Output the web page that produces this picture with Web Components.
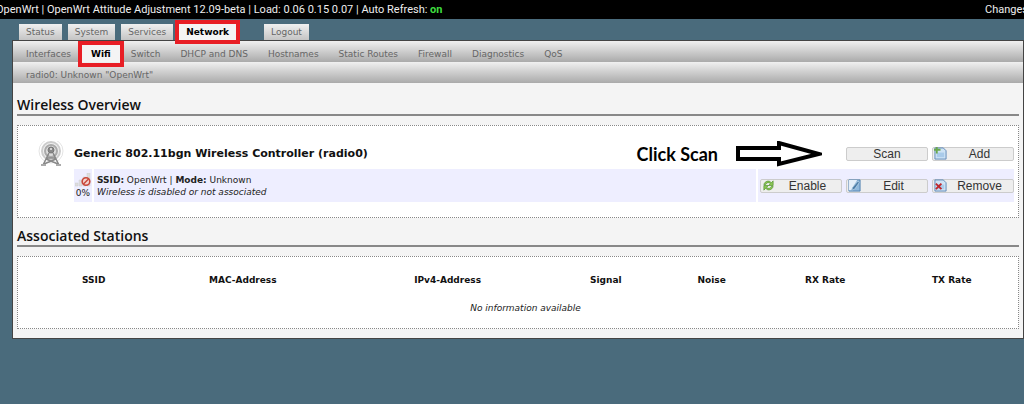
<!DOCTYPE html>
<html lang="en">
<head>
    <meta charset="UTF-8">
    <meta name="viewport" content="width=device-width, initial-scale=1.0">
    <title>OpenWrt - Wireless Overview</title>
    <style>
        body {
            margin: 0;
            background: #4a6b7c;
            font: 9px/12px "DejaVu Sans", Verdana, sans-serif;
            color: #222;
            overflow-x: hidden;
        }
        status-bar b { color: #3fdc3f; }
    </style>
</head>
<body>
    <status-bar>
        <span>OpenWrt | OpenWrt Attitude Adjustment 12.09-beta | Load: 0.06 0.15 0.07 | Auto Refresh: <b>on</b></span>
        <a slot="right" href="#changes">Changes</a>
    </status-bar>

    <nav-row kind="tabs">
        <nav-item kind="tab" href="#status">Status</nav-item>
        <nav-item kind="tab" href="#system">System</nav-item>
        <nav-item kind="tab" href="#services">Services</nav-item>
        <nav-item kind="tab" href="#network" active>Network</nav-item>
        <nav-item kind="tab" href="#logout" apart>Logout</nav-item>
    </nav-row>

    <main-panel>
        <nav-row kind="menu">
            <nav-item href="#interfaces">Interfaces</nav-item>
            <nav-item href="#wifi" active>Wifi</nav-item>
            <nav-item href="#switch">Switch</nav-item>
            <nav-item href="#dhcp">DHCP and DNS</nav-item>
            <nav-item href="#hostnames">Hostnames</nav-item>
            <nav-item href="#routes">Static Routes</nav-item>
            <nav-item href="#firewall">Firewall</nav-item>
            <nav-item href="#diagnostics">Diagnostics</nav-item>
            <nav-item href="#qos">QoS</nav-item>
        </nav-row>
        <nav-row kind="menu">
            <nav-item href="#radio0">radio0: Unknown "OpenWrt"</nav-item>
        </nav-row>

        <panel-section heading="Wireless Overview">
            <radio-device name="Generic 802.11bgn Wireless Controller (radio0)">
                <scan-hint slot="hint">Click Scan</scan-hint>
                <icon-button slot="actions">Scan</icon-button>
                <icon-button slot="actions" icon="add">Add</icon-button>
                <wifi-network ssid="OpenWrt" mode="Unknown" signal="0%">
                    Wireless is disabled or not associated
                    <icon-button slot="actions" icon="reload">Enable</icon-button>
                    <icon-button slot="actions" icon="edit">Edit</icon-button>
                    <icon-button slot="actions" icon="remove">Remove</icon-button>
                </wifi-network>
            </radio-device>
        </panel-section>

        <panel-section heading="Associated Stations">
            <station-table></station-table>
        </panel-section>
    </main-panel>

    <template id="status-bar">
        <style>
            :host {
                display: flex;
                justify-content: space-between;
                margin: 0 -4px;
                background: #000;
                color: #eee;
                font: 11px/19px Roboto, Tahoma, sans-serif;
                white-space: nowrap;
            }
            ::slotted(a) { color: inherit; text-decoration: none; }
        </style>
        <slot></slot>
        <slot name="right"></slot>
    </template>

    <template id="nav-row">
        <style>
            :host { display: block; }
            nav { display: flex; }
            :host([kind="tabs"]) nav { gap: 6px; padding: 5px 19px 0; }
            :host([kind="menu"]) nav {
                height: 21px;
                padding: 0 3px;
                background: linear-gradient(#f0f0f0, #aaa);
            }
        </style>
        <nav><slot></slot></nav>
    </template>

    <template id="nav-item">
        <style>
            :host { display: block; position: relative; }
            a {
                display: block;
                padding: 7px 10px 2px;
                color: #666;
                text-decoration: none;
                white-space: nowrap;
            }
            :host([kind="tab"]) a {
                padding: 2px 7px;
                background: linear-gradient(#f0f0f0, #c4c4c4);
            }
            :host([apart]) { margin-left: 22px; }
            :host([active]) a { color: #000; font-weight: bold; background: #f4f4f4; }
            /* red frame drawn over the current entry */
            :host([active])::after {
                content: "";
                position: absolute;
                z-index: 1;
                inset: -4px;
                border: 4px solid #e81e25;
                pointer-events: none;
            }
            :host([active]:not([kind="tab"]))::after { inset: 0 -3px -5px; }
        </style>
        <a><slot></slot></a>
    </template>

    <template id="main-panel">
        <style>
            :host {
                display: block;
                margin-left: 12px;
                padding-bottom: 9px;
                border: 1px solid #444;
                background: #f4f4f4;
            }
            ::slotted(panel-section:first-of-type) { margin-top: 4px; }
        </style>
        <slot></slot>
    </template>

    <template id="panel-section">
        <style>
            :host { display: block; padding: 8px 4px 0; }
            h2 {
                margin: 0 0 9px;
                border-bottom: 2px solid #888;
                color: #111;
                font: 600 14px/19px "Open Sans", "Trebuchet MS", sans-serif;
            }
            section { border: 1px dotted #888; background: #fff; }
        </style>
        <h2></h2>
        <section><slot></slot></section>
    </template>

    <template id="radio-device">
        <style>
            :host { display: block; padding: 14px 4px 15px 20px; }
            header { display: flex; align-items: center; gap: 4px; height: 27px; margin-bottom: 2px; }
            svg { width: 26px; height: 26px; flex: none; }
            h3 { flex: 1; margin: 0 0 0 6px; font-size: 11px; color: #111; white-space: nowrap; }
            .networks { margin-left: 36px; }
        </style>
        <header>
            <svg viewBox="0 0 26 26" fill="none" stroke="#999">
                <circle cx="13" cy="10" r="12" stroke="#e4e4e4"/>
                <circle cx="13" cy="10" r="9" fill="#f0f0f0" stroke="#ccc" stroke-width="2"/>
                <circle cx="13" cy="10" r="6" fill="#ddd" stroke="#aaa" stroke-width="2"/>
                <path d="M11 12 5 24M15 12l6 12M8 18l12 5M18 18 6 23M9 17h8" stroke="#888" stroke-width="1.5"/>
                <path d="M3 24h5M18 24h5" stroke="#aaa" stroke-width="2"/>
                <circle cx="13" cy="9" r="3" fill="#888" stroke="#777"/>
                <circle cx="13" cy="8" r="1" fill="#eee" stroke="none"/>
            </svg>
            <h3></h3>
            <slot name="hint"></slot>
            <slot name="actions"></slot>
        </header>
        <div class="networks"><slot></slot></div>
    </template>

    <template id="wifi-network">
        <style>
            :host { display: flex; gap: 2px; height: 33px; }
            div { background: #eef; }
            .signal { width: 18px; padding-top: 4px; box-sizing: border-box; text-align: center; }
            .signal svg { display: block; width: 16px; height: 14px; margin: 0 auto; }
            .info { flex: 1; padding: 5px 3px; box-sizing: border-box; }
            .actions { display: flex; align-items: center; gap: 4px; padding-left: 2px; }
            p { margin: 0; }
        </style>
        <div class="signal">
            <svg viewBox="0 0 16 14">
                <path d="M0 10h3v3H0zM4 7h3v6H4zM8 4h3v9H8zM12 0h3v13h-3z" fill="#ddd" stroke="#ccc" stroke-width=".5"/>
                <circle cx="11" cy="8.5" r="3.8" fill="#f3d5d0" stroke="#c9473a" stroke-width="1.6"/>
                <path d="m8.5 11 5-5" stroke="#c9473a" stroke-width="1.5"/>
            </svg>
            <span id="signal"></span>
        </div>
        <div class="info">
            <p><b>SSID:</b> <span id="ssid"></span> | <b>Mode:</b> <span id="mode"></span></p>
            <em><slot></slot></em>
        </div>
        <div class="actions"><slot name="actions"></slot></div>
    </template>

    <template id="icon-button">
        <style>
            :host { display: block; flex: none; }
            button {
                display: flex;
                align-items: center;
                width: 82px;
                height: 14px;
                padding: 0 1px;
                border: 1px solid #ccc;
                border-radius: 2px;
                background: #eee;
                color: #333;
                font: 12px/12px "Liberation Sans", Arial, sans-serif;
            }
            svg { width: 13px; height: 13px; flex: none; }
            svg:empty { display: none; }
            span { flex: 1; text-align: center; }
        </style>
        <button type="button"><svg viewBox="0 0 14 14"></svg><span><slot></slot></span></button>
    </template>

    <template id="scan-hint">
        <style>
            :host {
                display: flex;
                align-items: center;
                gap: 18px;
                margin-right: 20px;
                color: #000;
                font: bold 18px/24px Lato, Calibri, sans-serif;
                white-space: nowrap;
            }
            svg { width: 86px; height: 26px; }
        </style>
        <slot></slot>
        <svg viewBox="0 0 86 26"><path d="M2 7h41V2l40 11-40 10v-5H2z" fill="#fff" stroke="#000" stroke-width="4"/></svg>
    </template>

    <template id="station-table">
        <style>
            :host { display: block; padding: 13px 4px 8px 19px; }
            table { width: 100%; border-collapse: collapse; table-layout: fixed; }
            th { padding: 0 0 0 45px; height: 19px; text-align: left; color: #111; white-space: nowrap; }
            td { padding: 6px 0 0; height: 25px; text-align: center; font-style: italic; }
        </style>
        <table>
            <colgroup>
                <col style="width: 13%"><col style="width: 21%"><col style="width: 18%"><col style="width: 11%">
                <col style="width: 11%"><col style="width: 13%"><col style="width: 13%">
            </colgroup>
            <thead>
                <tr><th>SSID</th><th>MAC-Address</th><th>IPv4-Address</th><th>Signal</th><th>Noise</th><th>RX Rate</th><th>TX Rate</th></tr>
            </thead>
            <tbody>
                <tr><td colspan="7">No information available</td></tr>
            </tbody>
        </table>
    </template>

    <script>
        const page = '<path d="M1 1h9l3 3v9H1z" fill="#cfe3f5" stroke="#5b86b5"/><path d="M3 6h8v5H3z" fill="#a9cbea"/>'
        const icons = {
            add: page + '<path d="M3 0v7M0 3h7" stroke="#6aa84f" stroke-width="2"/>',
            remove: page + '<path d="m2 5 6 6M8 5l-6 6" stroke="#c0282d" stroke-width="2"/>',
            edit: '<path d="M1 1h12v12H1z" fill="#8fb8dc" stroke="#4f7fae"/><path d="M1 1h9L3 12H1z" fill="#e4eef8"/><path d="M11 2 5 9l-1 3 3-1 5-7z" fill="#4d7ea8" stroke="#e8f2fa" stroke-width=".5"/>',
            reload: '<path d="M2 6c1-4 6-5 8-2l2-2v5H7l2-2C7 3 5 4 4 6zM12 8c-1 4-6 5-8 2l-2 2V7h5L5 9c2 2 4 1 5-1z" fill="#8cc653" stroke="#4f8f2b" stroke-width=".7"/>'
        }

        // base class: clones the template named after the tag
        class BaseElement extends HTMLElement {
            constructor() {
                super()
                const tpl = document.getElementById(this.localName)
                this.attachShadow({mode: 'open'}).appendChild(tpl.content.cloneNode(true))
            }
            find(selector) {
                return this.shadowRoot.querySelector(selector)
            }
        }

        class NavItem extends BaseElement {
            connectedCallback() {
                this.find('a').href = this.getAttribute('href')
            }
        }

        class PanelSection extends BaseElement {
            connectedCallback() {
                this.find('h2').textContent = this.getAttribute('heading')
            }
        }

        class RadioDevice extends BaseElement {
            connectedCallback() {
                this.find('h3').textContent = this.getAttribute('name')
            }
        }

        class WifiNetwork extends BaseElement {
            connectedCallback() {
                for (const key of ['ssid', 'mode', 'signal']) {
                    this.find('#' + key).textContent = this.getAttribute(key)
                }
            }
        }

        class IconButton extends BaseElement {
            connectedCallback() {
                this.find('svg').innerHTML = icons[this.getAttribute('icon')] || ''
            }
        }

        customElements.define('status-bar', class extends BaseElement {})
        customElements.define('nav-row', class extends BaseElement {})
        customElements.define('nav-item', NavItem)
        customElements.define('main-panel', class extends BaseElement {})
        customElements.define('panel-section', PanelSection)
        customElements.define('radio-device', RadioDevice)
        customElements.define('wifi-network', WifiNetwork)
        customElements.define('icon-button', IconButton)
        customElements.define('scan-hint', class extends BaseElement {})
        customElements.define('station-table', class extends BaseElement {})
    </script>
</body>
</html>
